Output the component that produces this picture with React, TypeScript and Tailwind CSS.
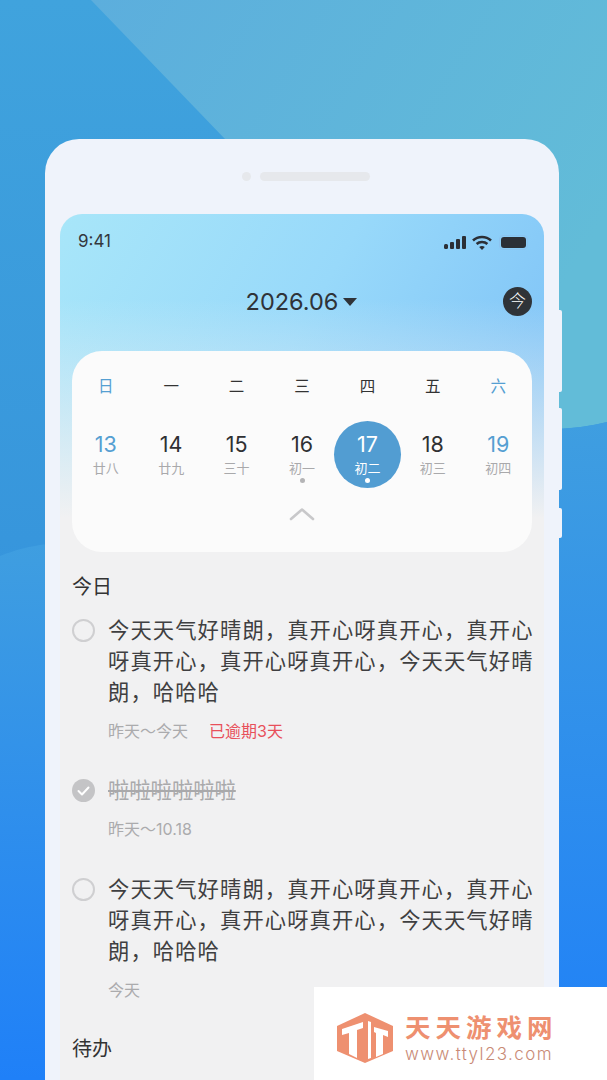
const font = 'font-["Inter","Noto_Sans_CJK_SC",sans-serif]';

const days = [
  { week: '日', date: '13', lunar: '廿八', accent: true },
  { week: '一', date: '14', lunar: '廿九' },
  { week: '二', date: '15', lunar: '三十' },
  { week: '三', date: '16', lunar: '初一', dot: true },
  { week: '四', date: '17', lunar: '初二', active: true, dot: true },
  { week: '五', date: '18', lunar: '初三' },
  { week: '六', date: '19', lunar: '初四', accent: true },
];

const longText = '今天天气好晴朗\uFF0C真开心呀真开心\uFF0C真开心呀真开心\uFF0C真开心呀真开心\uFF0C今天天气好晴朗\uFF0C哈哈哈';

function StatusIcons() {
  return (
    <div className="flex items-center gap-[5px]">
      <svg width="23" height="13" viewBox="0 0 23 13" fill="#2b2f36">
        <rect x="0" y="8" width="4" height="5" rx="1.5" />
        <rect x="6" y="6" width="4" height="7" rx="1" />
        <rect x="12" y="3" width="4" height="10" rx="1" />
        <rect x="18" y="0" width="4" height="13" rx="1" />
      </svg>
      <svg width="20" height="15" viewBox="0 0 20 15" fill="none" stroke="#2b2f36" strokeWidth="2.6">
        <path d="M1 5.5 C6 0.8 14 0.8 19 5.5" />
        <path d="M4.6 9 C7.5 6.4 12.5 6.4 15.4 9" />
        <path d="M10 15 L7.2 12 C8.8 10.8 11.2 10.8 12.8 12 Z" fill="#2b2f36" stroke="none" />
      </svg>
      <div className="ml-[2px] flex h-[15px] w-[29px] items-center rounded-[4px] border border-[#8cc4f0] p-[1px]">
        <div className="h-full w-full rounded-[3px] bg-[#2b2f36]" />
      </div>
    </div>
  );
}

function Logo() {
  return (
    <svg width="58" height="50" viewBox="0 0 58 50">
      <path d="M29 0 L57 13 V38 L29 50 L1 38 V13 Z" fill="#ee9070" />
      <path d="M6 16 L27 9 V15 L21 17 V45 L13 41 V20 L6 22 Z" fill="#fff" />
      <path d="M32 8 L35 9 V45 L32 46 Z" fill="#fff" />
      <path d="M38 14 L52 18 V24 L47 22 V41 L40 44 V20 L38 19 Z" fill="#fff" />
    </svg>
  );
}

function Task({ text, done, meta, overdue, className }: { text: string; done?: boolean; meta: string; overdue?: string; className?: string }) {
  return (
    <div className={`flex gap-[13px] ${className ?? ''}`}>
      <div className="flex h-[31px] w-[23px] shrink-0 items-center justify-center">
        {done ? (
          <div className="flex h-[23px] w-[23px] items-center justify-center rounded-full bg-[#c4c4c6]">
            <svg width="13" height="10" viewBox="0 0 13 10" fill="none" stroke="#fff" strokeWidth="2" strokeLinecap="round" strokeLinejoin="round">
              <path d="M1.5 5 L5 8.5 L11.5 1.5" />
            </svg>
          </div>
        ) : (
          <div className="h-[23px] w-[23px] rounded-full border-2 border-[#cfcfd1]" />
        )}
      </div>
      <div className="w-[430px] shrink-0">
        <p className={`text-[21.3px] leading-[31px] ${done ? 'text-[#a9a9ab] line-through' : 'tracking-[1.1px] text-[#3f3f41]'}`}>{text}</p>
        <div className="mt-[11px] flex gap-[21px] text-[16px] leading-[24px] text-[#ababad]">
          <span>{meta}</span>
          {overdue && <span className="text-[#e8505b]">{overdue}</span>}
        </div>
      </div>
    </div>
  );
}

export default function App() {
  return (
    <div className={`relative h-[1080px] w-[607px] overflow-hidden bg-[linear-gradient(180deg,#40a3dd_0%,#3796dc_50%,#2f8fe6_75%,#1f80f8_100%)] pt-[139px] ${font}`}>
      {/* background shapes */}
      <svg className="absolute inset-0" width="607" height="1080" viewBox="0 0 607 1080">
        <defs>
          <linearGradient id="top" x1="0" y1="0" x2="1" y2="0.5">
            <stop offset="0" stopColor="#5caedd" />
            <stop offset="1" stopColor="#62bcd8" />
          </linearGradient>
          <linearGradient id="low" x1="0" y1="0" x2="0" y2="1">
            <stop offset="0" stopColor="#3f9ee0" />
            <stop offset="1" stopColor="#1f80f8" />
          </linearGradient>
        </defs>
        <path d="M91 0 L607 0 L607 422 C590 426 575 428 560 429 L225 139 Z" fill="url(#top)" />
        <path d="M607 422 C590 426 575 428 556 429 V1080 H607 Z" fill="url(#low)" />
        <path d="M0 556 C15 550 30 546 48 544 V1080 H0 Z" fill="url(#low)" />
      </svg>

      {/* side buttons */}
      <div className="absolute left-[558px] top-[310px] h-[82px] w-1 rounded-r-[2px] bg-[#eff3fb]" />
      <div className="absolute left-[558px] top-[408px] h-[82px] w-1 rounded-r-[2px] bg-[#eff3fb]" />
      <div className="absolute left-[558px] top-[508px] h-[30px] w-1 rounded-r-[2px] bg-[#eff3fb]" />

      <div className="relative mx-[45px] w-[514px] rounded-t-[34px] bg-[#eff3fb] px-[15px] pt-[33px]">
        <div className="flex h-[42px] items-start justify-center gap-[9px] pl-[8px]">
          <div className="h-[9px] w-[9px] rounded-full bg-[#e6e8ec]" />
          <div className="h-[9px] w-[110px] rounded-full bg-[#e6e8ec]" />
        </div>

        <div className="h-[870px] overflow-hidden rounded-t-[22px] bg-[#f1f1f2]">
          <div className="bg-[linear-gradient(180deg,transparent_25%,#f1f1f2_90%),linear-gradient(120deg,#a8e6f9_0%,#98d9fa_45%,#78bdf6_100%)] px-[12px] pb-0">
            <div className="flex h-[56px] items-center justify-between px-[6px] pt-[1px]">
              <span className="pb-[1px] text-[17px] text-[#33373d]">9:41</span>
              <div className="mr-[-2px]">
                <StatusIcons />
              </div>
            </div>
            <div className="relative flex h-[63px] items-center justify-center">
              <div className="flex items-center gap-[5px] pl-[1px] pr-[2px]">
                <span className="text-[23.5px] leading-[30px] text-[#2f3338]">2026.06</span>
                <div className="h-0 w-0 border-x-[7px] border-t-[8px] border-x-transparent border-t-[#2f3338]" />
              </div>
              <div className="absolute right-0 top-[17px] flex h-[29px] w-[29px] items-center justify-center rounded-full bg-[#2f3338] text-[17px] font-light leading-none text-white">今</div>
            </div>
            <div className="mt-[18px] h-[201px] rounded-[30px] bg-[#fbfbfb] px-[1px] pt-[25px]">
              <div className="grid grid-cols-7">
                {days.map(d => (
                  <div key={d.date} className="flex flex-col items-center">
                    <span className={`text-[15.5px] leading-[22px] ${d.accent ? 'text-[#559fd2]' : 'text-[#333]'}`}>{d.week}</span>
                    <div className={`relative mt-[23px] flex h-[67px] w-[67px] flex-col items-center rounded-full pt-[9px] ${d.active ? 'bg-[#529dd2]' : ''}`}>
                      <span className={`text-[21.5px] leading-[28px] ${d.active ? 'text-white' : d.accent ? 'text-[#559fd2]' : 'text-[#2f3033]'}`}>{d.date}</span>
                      <span className={`mt-[2px] text-[13px] leading-[17px] ${d.active ? 'text-white' : 'text-[#a9a9ab]'}`}>{d.lunar}</span>
                      {d.dot && <div className={`absolute top-[57px] h-[5px] w-[5px] rounded-full ${d.active ? 'bg-white' : 'bg-[#b4b4b6]'}`} />}
                    </div>
                  </div>
                ))}
              </div>
              <div className="mt-[19px] flex justify-center">
                <svg width="26" height="14" viewBox="0 0 26 14" fill="none" stroke="#c8c8ca" strokeWidth="2.6" strokeLinecap="round" strokeLinejoin="round">
                  <path d="M2 12 L13 2.5 L24 12" />
                </svg>
              </div>
            </div>
          </div>

          <div className="px-[12px] pt-[21px]">
            <h2 className="text-[20px] leading-[28px] text-[#333]">今日</h2>
            <Task className="mt-[14px]" text={longText} meta={'昨天\uFF5E今天'} overdue="已逾期3天" />
            <Task className="mt-[32px]" text="啦啦啦啦啦啦" done meta={'昨天\uFF5E10.18'} />
            <Task className="mt-[33px]" text={longText} meta="今天" />
            <h2 className="mt-[33px] text-[20px] leading-[28px] text-[#333]">待办</h2>
          </div>
        </div>
      </div>

      {/* watermark */}
      <div className="absolute left-[314px] top-[987px] flex h-[93px] w-[293px] items-start gap-[11px] bg-white pl-[22px] pt-[26px]">
        <Logo />
        <div className="-mt-[1px] flex flex-col">
          <span className="text-[25.5px] font-bold leading-[32px] tracking-[5px] text-[#ee9070]">天天游戏网</span>
          <span className="text-[17px] font-light leading-[20px] tracking-[1.4px] text-[#c98a76]">www.ttyl23.com</span>
        </div>
      </div>
    </div>
  );
}
